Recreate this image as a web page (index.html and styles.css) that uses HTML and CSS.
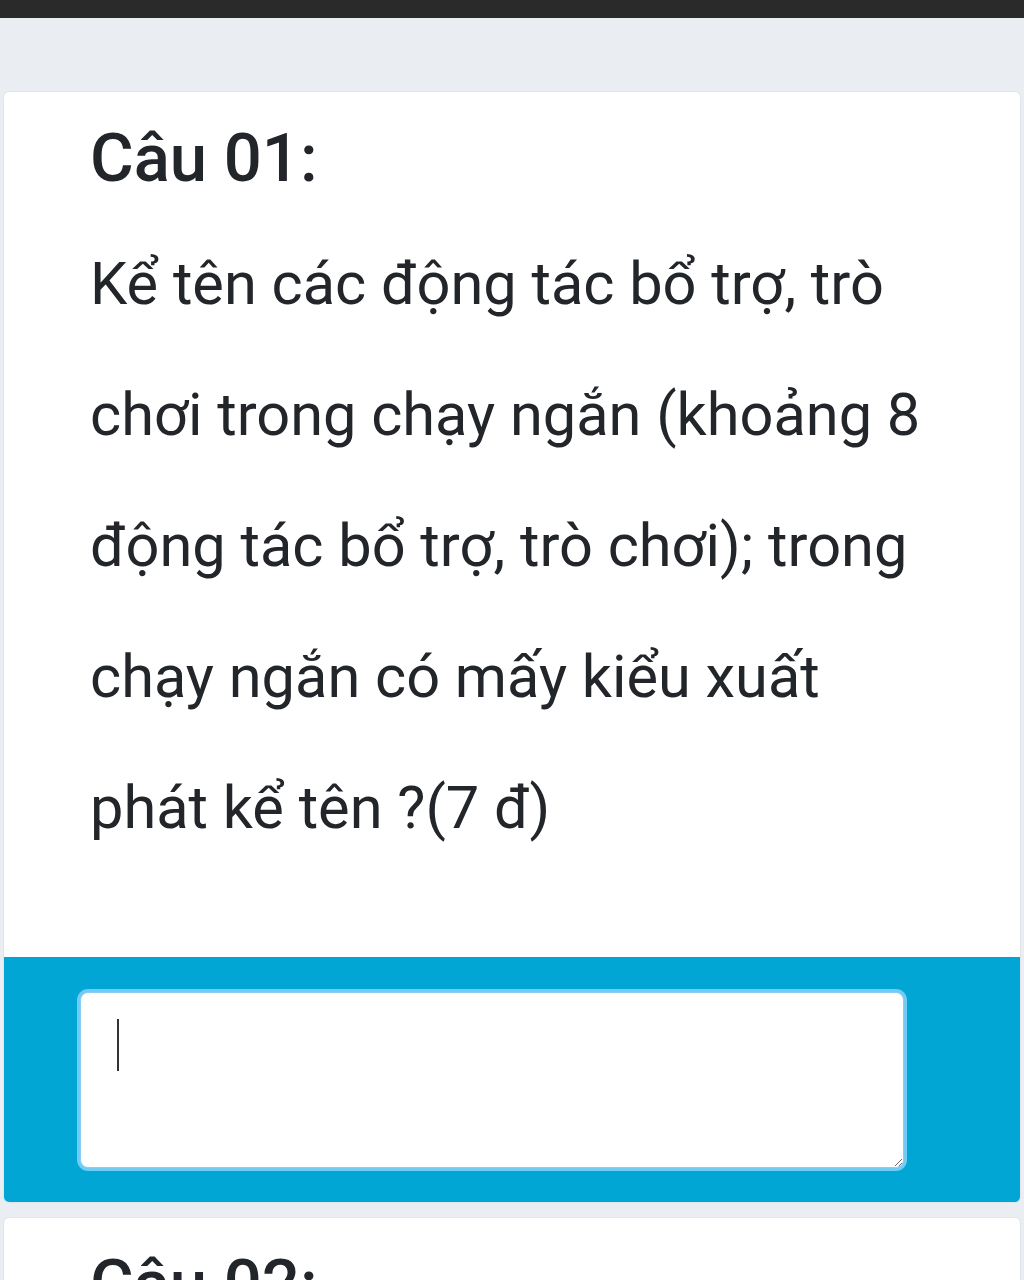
FILE: index.html
```html
<!DOCTYPE html>
<html>
<head>
  <meta charset="utf-8">
  <link rel="stylesheet" href="styles.css">
</head>
<body>
	<div class="topbar"></div>
	<div class="page">
		<div class="card">
			<div class="card-body">
				<h2 class="q-title">Câu 01:</h2>
				<p class="q-text">Kể tên các động tác bổ trợ, trò chơi trong chạy ngắn (khoảng 8 động tác bổ trợ, trò chơi); trong chạy ngắn có mấy kiểu xuất phát kể tên ?(7 đ)</p>
			</div>
			<div class="card-footer">
				<div class="answer">
					<textarea class="answer-box"></textarea>
					<span class="caret"></span>
				</div>
			</div>
		</div>
		<div class="card">
			<div class="card-body">
				<h2 class="q-title">Câu 02:</h2>
			</div>
		</div>
	</div>
</body>
</html>
```

FILE: styles.css
```css
/* ============================================================
  PAGE
============================================================ */
body {
  margin: 0;
  background-color: #eaedf2;
  font-family: Roboto, "Noto Sans", "Liberation Sans", sans-serif;
  color: #222529;
}
.topbar {
  height: 18px;
  background-color: #2a2a2a;
}
.page {
  padding: 73px 3px 0 3px;
}

/* ============================================================
  CARD
============================================================ */
.card {
  background-color: #fff;
  border: 1px solid #e1e4e8;
  border-radius: 6px;
  margin-bottom: 14px;
  overflow: hidden;
}
.card-body {
  padding: 26px 80px 83px 86px;
}
.q-title {
  margin: 0 0 21px 0;
  font-size: 67px;
  font-weight: 500;
  line-height: 1.2;
}
.q-text {
  margin: 0;
  font-size: 59.5px;
  font-weight: 400;
  line-height: 131px;
}

/* ============================================================
  ANSWER
============================================================ */
.card-footer {
  background-color: #02a6d5;
  padding: 35px 0 34px 76px;
}
.answer {
  position: relative;
  width: 824px;
  height: 176px;
}
.answer-box {
  display: block;
  box-sizing: border-box;
  width: 100%;
  height: 100%;
  margin: 0;
  padding: 20px 36px;
  background-color: #fff;
  border: 1px solid #8ccdf5;
  border-radius: 8px;
  box-shadow: 0 0 0 3px rgba(150, 215, 255, 0.75);
  outline: none;
  resize: vertical;
  font-family: inherit;
  font-size: 44px;
}
.caret {
  position: absolute;
  left: 37px;
  top: 27px;
  width: 2px;
  height: 52px;
  background-color: #333;
}
```
